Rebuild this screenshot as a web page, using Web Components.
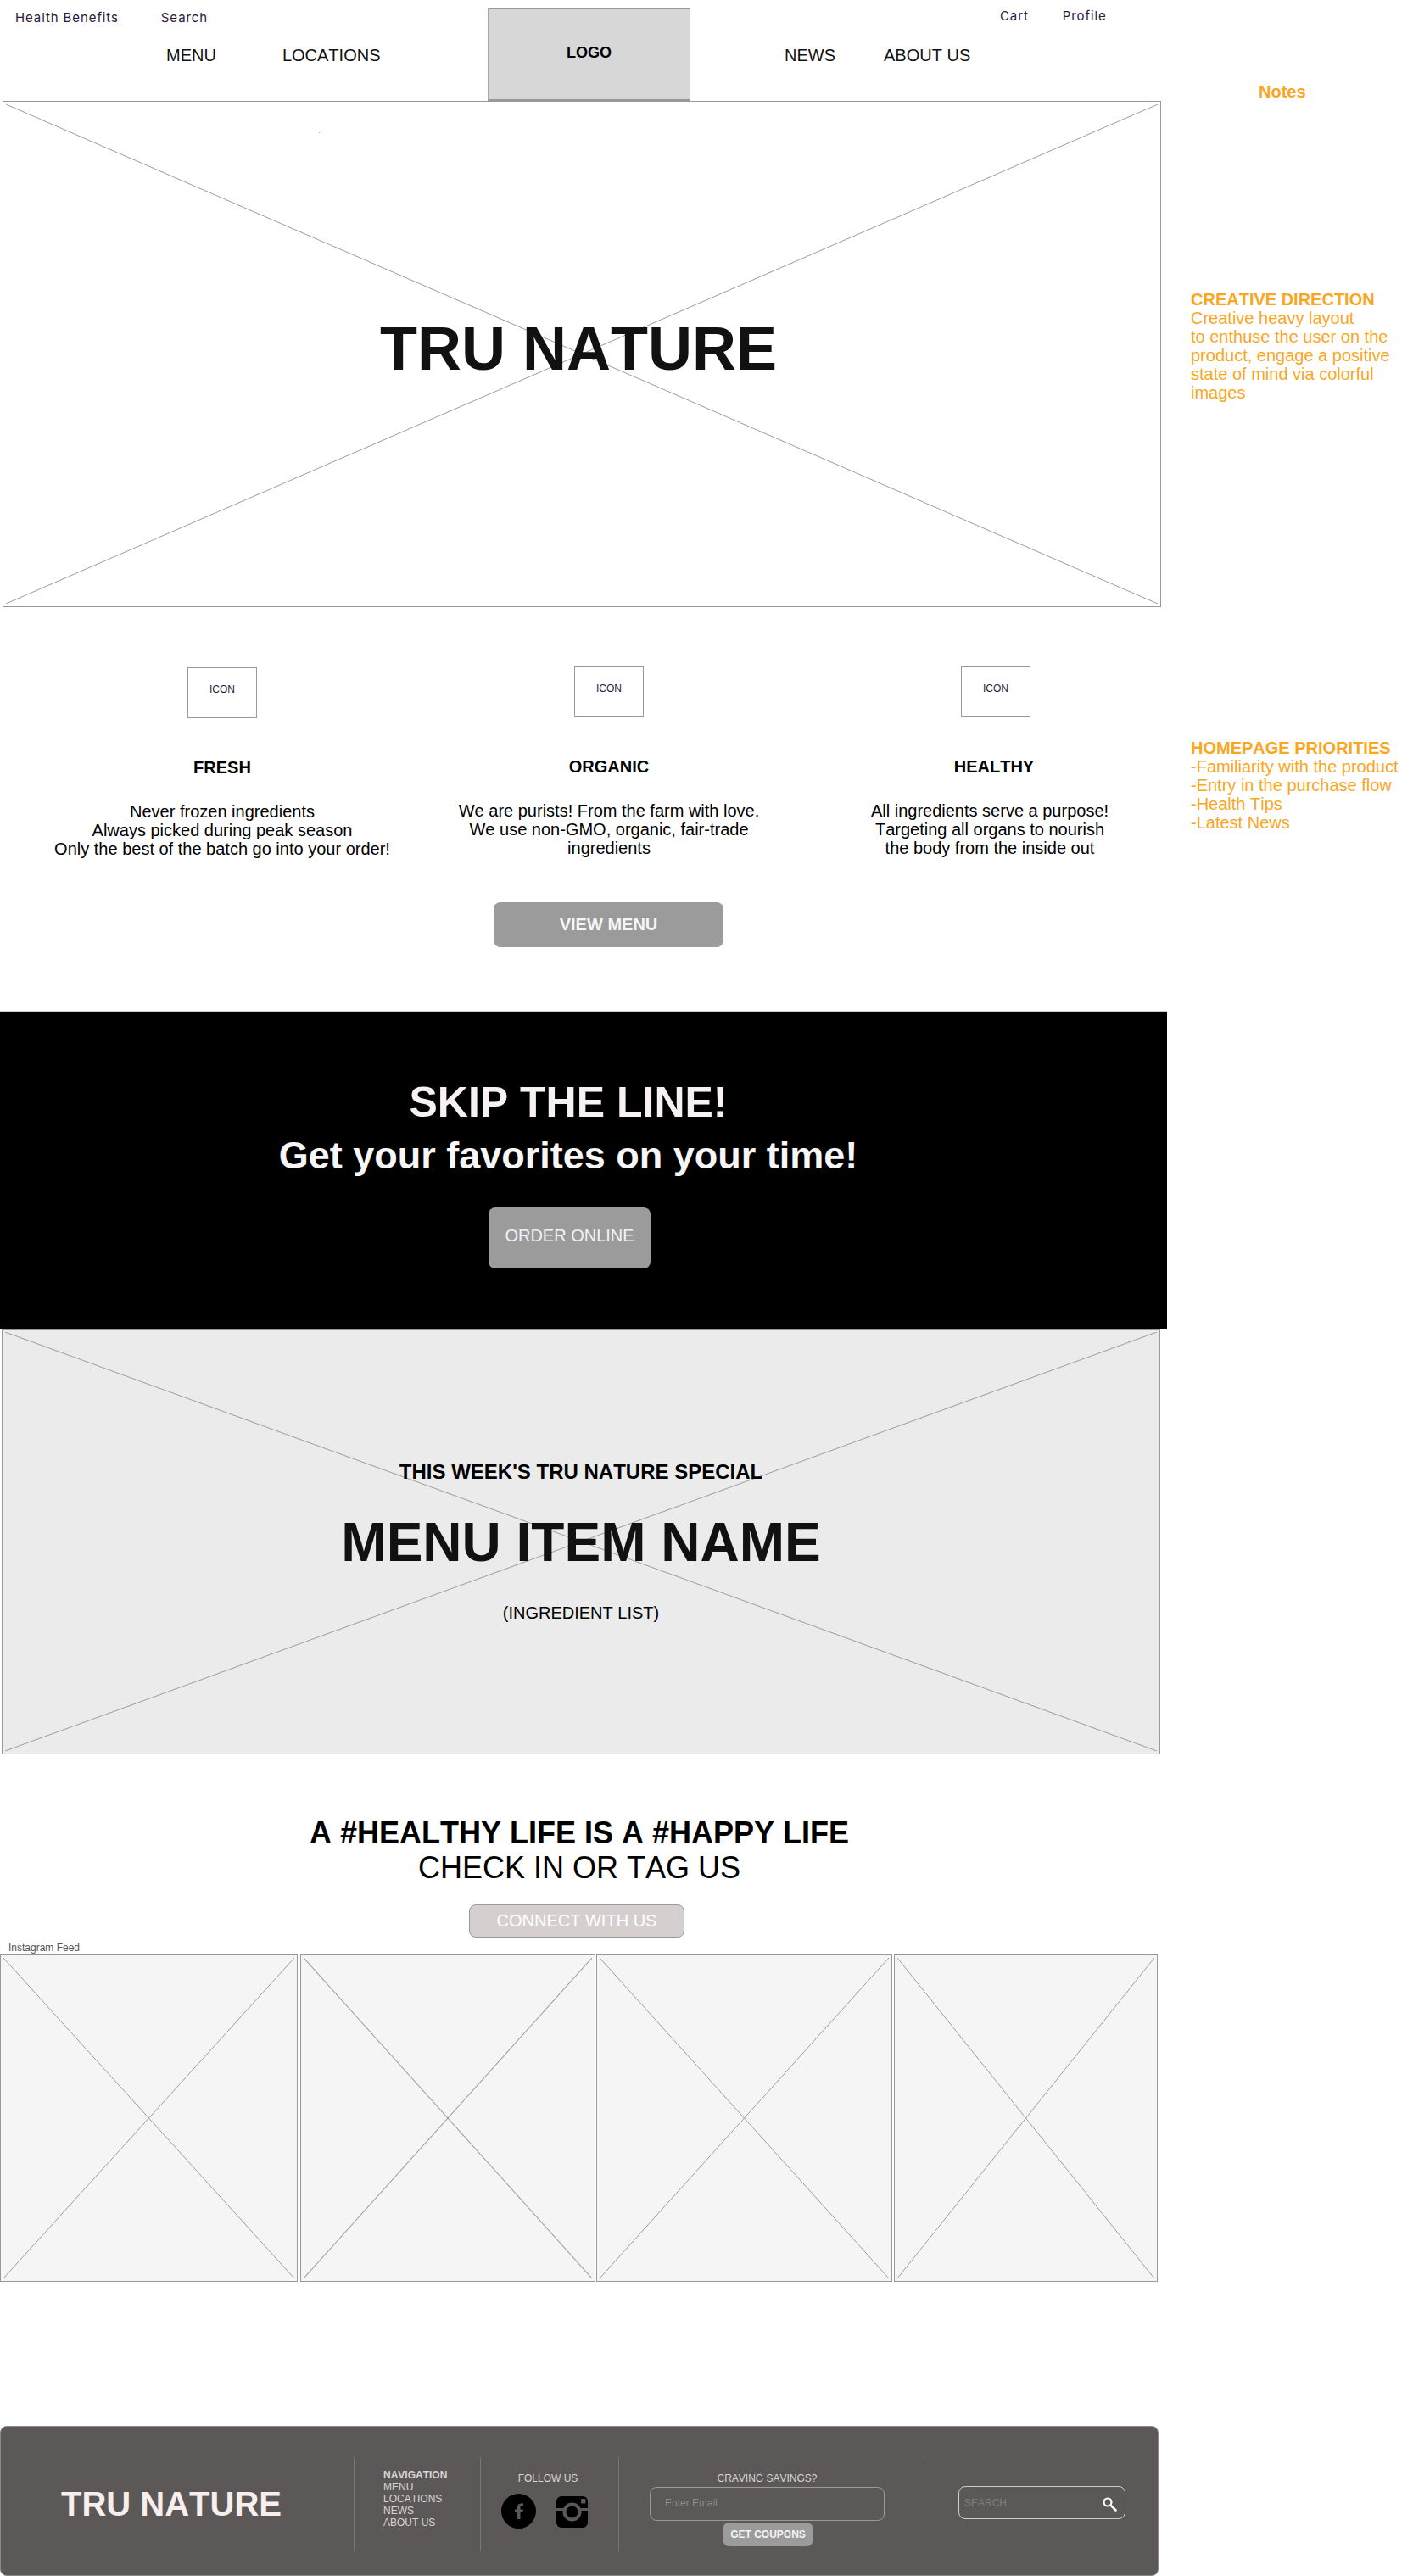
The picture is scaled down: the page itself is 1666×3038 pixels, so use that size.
<!DOCTYPE html>
<html lang="en">
  <head>
    <meta charset="UTF-8" />
    <title>Tru Nature wireframe</title>
    <style>
      html, body { margin: 0; background: #fff; }
      body { font-family: "Liberation Sans", Arial, sans-serif; color: #000; font-kerning: none; }
      .page { display: grid; grid-template-columns: 1376px 290px; width: 1666px; height: 3038px; overflow: hidden; }
      .main { display: block; min-width: 0; }
    </style>
  </head>
  <body>
    <div class="page">
      <div class="main">
        <site-header></site-header>
        <wire-box style="margin-left:3px;width:1366px;height:597px;">
          <hero-title></hero-title>
        </wire-box>
        <feature-row>
          <feature-col title="FRESH">Never frozen ingredients<br />Always picked during peak season<br />Only the best of the batch go into your order!</feature-col>
          <feature-col title="ORGANIC" style="--shift:-1px">We are purists! From the farm with love.<br />We use non-GMO, organic, fair-trade<br />ingredients</feature-col>
          <feature-col title="HEALTHY" style="--shift:-1px;--text-pad:14px;--head-pad:4px">All ingredients serve a purpose!<br />Targeting all organs to nourish<br />the body from the inside out</feature-col>
        </feature-row>
        <order-band></order-band>
        <wire-box style="margin-left:2px;width:1366px;height:502px;--fill:#ebebeb;">
          <special-item></special-item>
        </wire-box>
        <social-feed></social-feed>
        <site-footer></site-footer>
      </div>
      <side-notes></side-notes>
    </div>

    <script>
      const FONT = `"Liberation Sans", Arial, sans-serif`;

      // 線の入ったプレースホルダー
      class WireBox extends HTMLElement {
        constructor() {
          super();
          this.attachShadow({ mode: "open" });
        }
        connectedCallback() {
          this.shadowRoot.innerHTML = `
            <style>
              :host { display: block; position: relative; box-sizing: border-box; border: 1px solid #999; background: var(--fill, transparent); }
              svg { position: absolute; inset: 3px; width: calc(100% - 6px); height: calc(100% - 6px); }
              line { stroke: #9c9c9c; stroke-width: 1; vector-effect: non-scaling-stroke; }
              .content { position: relative; height: 100%; }
            </style>
            <svg viewBox="0 0 100 100" preserveAspectRatio="none" aria-hidden="true">
              <line x1="0" y1="0" x2="100" y2="100"></line>
              <line x1="100" y1="0" x2="0" y2="100"></line>
            </svg>
            <div class="content"><slot></slot></div>
          `;
        }
      }

      class SiteHeader extends HTMLElement {
        constructor() {
          super();
          this.attachShadow({ mode: "open" });
        }
        connectedCallback() {
          this.shadowRoot.innerHTML = `
            <style>
              :host { display: flex; height: 119px; font-family: ${FONT}; position: relative; z-index: 1; }
              .side { flex: none; box-sizing: border-box; }
              .left { width: 575px; }
              .right { width: 562px; }
              .top { display: flex; height: 21px; align-items: center; padding-top: 10px; font: 15px/21px Inter, Roboto, sans-serif; color: #2b1a3d; letter-spacing: .9px; }
              .nav { display: flex; height: 24px; align-items: center; margin-top: 22px; font-size: 20px; line-height: 24px; color: #111; }
              .left .top { padding-left: 18px; gap: 50px; }
              .left .nav { padding-left: 196px; gap: 78px; }
              .right .top { padding-left: 365px; gap: 40px; padding-top: 8px; }
              .right .nav { padding-left: 111px; gap: 57px; margin-top: 24px; }
              .logo { flex: none; box-sizing: border-box; width: 239px; height: 109px; margin-top: 10px; background: #d7d7d7; border: 1px solid #a5a5a5; border-top-color: #999; border-bottom: 2px solid #999; text-align: center; font-weight: bold; font-size: 18px; line-height: 20px; padding-top: 41px; }
            </style>
            <div class="side left">
              <div class="top"><span>Health Benefits</span><span>Search</span></div>
              <div class="nav"><span>MENU</span><span>LOCATIONS</span></div>
            </div>
            <div class="logo">LOGO</div>
            <div class="side right">
              <div class="top"><span>Cart</span><span>Profile</span></div>
              <div class="nav"><span>NEWS</span><span>ABOUT US</span></div>
            </div>
          `;
        }
      }

      class HeroTitle extends HTMLElement {
        constructor() {
          super();
          this.attachShadow({ mode: "open" });
        }
        connectedCallback() {
          this.shadowRoot.innerHTML = `
            <style>
              :host { display: grid; place-items: center; height: 100%; padding: 0 8px 14px 0; box-sizing: border-box; font-family: ${FONT}; }
              h1 { margin: 0; font-size: 72px; line-height: 84px; font-weight: bold; color: #111; }
              i { position: absolute; left: 372px; top: 36px; width: 1px; height: 1px; background: #aaa; }
            </style>
            <i></i>
            <h1>TRU NATURE</h1>
          `;
        }
      }

      class FeatureRow extends HTMLElement {
        constructor() {
          super();
          this.attachShadow({ mode: "open" });
        }
        connectedCallback() {
          this.shadowRoot.innerHTML = `
            <style>
              :host { display: block; height: 476px; box-sizing: border-box; padding-top: 70px; font-family: ${FONT}; }
              .cols { display: grid; grid-template-columns: repeat(3, 400px); column-gap: 56px; width: 1312px; padding-left: 62px; }
              .btn { box-sizing: border-box; width: 271px; height: 53px; margin: 52px 0 0 582px; border-radius: 8px; background: #9b9b9b; color: #f6f6f6; font-weight: bold; font-size: 20px; line-height: 53px; text-align: center; }
            </style>
            <div class="cols"><slot></slot></div>
            <div class="btn">VIEW MENU</div>
          `;
        }
      }

      class FeatureCol extends HTMLElement {
        constructor() {
          super();
          this.attachShadow({ mode: "open" });
        }
        connectedCallback() {
          const title = this.getAttribute("title") || "";
          this.removeAttribute("title");
          this.shadowRoot.innerHTML = `
            <style>
              :host { display: block; text-align: center; margin-top: calc(1px + var(--shift, 0px)); }
              .icon { box-sizing: border-box; width: 82px; height: 60px; margin: 0 auto; border: 1px solid #999; font-size: 12px; line-height: 14px; padding-top: 18px; color: #2b1a3d; }
              h3 { margin: 47px 0 0; padding-right: var(--head-pad, 0); font-size: 20px; line-height: 22px; font-weight: bold; }
              p { margin: 30px 0 0; padding-right: var(--text-pad, 0); font-size: 20px; line-height: 22px; }
            </style>
            <div class="icon">ICON</div>
            <h3>${title}</h3>
            <p><slot></slot></p>
          `;
        }
      }

      class OrderBand extends HTMLElement {
        constructor() {
          super();
          this.attachShadow({ mode: "open" });
        }
        connectedCallback() {
          this.shadowRoot.innerHTML = `
            <style>
              :host { display: block; box-sizing: border-box; height: 375px; border-top: 1px solid #ccc; background: #000; padding: 78px 36px 0 0; text-align: center; font-family: ${FONT}; color: #f7f1f1; }
              h2 { margin: 0; font-size: 50px; line-height: 58px; font-weight: bold; }
              p { margin: 8px 0 0; font-size: 45px; line-height: 52px; font-weight: bold; color: #f8f6f6; }
              .btn { box-sizing: border-box; width: 191px; height: 72px; margin: 35px 0 0 576px; border-radius: 8px; background: #9b9b9b; font-size: 20px; line-height: 24px; padding-top: 21px; color: #f2f2f2; }
            </style>
            <h2>SKIP THE LINE!</h2>
            <p>Get your favorites on your time!</p>
            <div class="btn">ORDER ONLINE</div>
          `;
        }
      }

      class SpecialItem extends HTMLElement {
        constructor() {
          super();
          this.attachShadow({ mode: "open" });
        }
        connectedCallback() {
          this.shadowRoot.innerHTML = `
            <style>
              :host { display: block; box-sizing: border-box; height: 100%; padding-top: 153px; text-align: center; font-family: ${FONT}; }
              h3 { margin: 0; font-size: 24px; line-height: 30px; font-weight: bold; }
              h2 { margin: 30px 0 0; font-size: 64px; line-height: 76px; font-weight: bold; color: #111; }
              p { margin: 32px 0 0; font-size: 20px; line-height: 26px; }
            </style>
            <h3>THIS WEEK'S TRU NATURE SPECIAL</h3>
            <h2>MENU ITEM NAME</h2>
            <p>(INGREDIENT LIST)</p>
          `;
        }
      }

      class SocialFeed extends HTMLElement {
        constructor() {
          super();
          this.attachShadow({ mode: "open" });
        }
        connectedCallback() {
          this.shadowRoot.innerHTML = `
            <style>
              :host { display: block; box-sizing: border-box; padding-top: 71px; font-family: ${FONT}; }
              h2 { margin: 0; padding-right: 10px; text-align: center; font-size: 36px; line-height: 44px; font-weight: bold; }
              p { margin: 0; padding-right: 10px; text-align: center; font-size: 36px; line-height: 38px; }
              .btn { box-sizing: border-box; width: 254px; height: 39px; margin: 24px 0 0 553px; border: 1px solid #999; border-radius: 8px; background: #d5cfcf; color: #fff; font-size: 20px; line-height: 37px; text-align: center; }
              .label { margin: 5px 0 1px 10px; font-size: 12px; line-height: 14px; color: #555; }
              .tiles { display: flex; height: 386px; }
              wire-box { --fill: #f5f5f5; flex: none; height: 386px; }
            </style>
            <h2>A #HEALTHY LIFE IS A #HAPPY LIFE</h2>
            <p>CHECK IN OR TAG US</p>
            <div class="btn">CONNECT WITH US</div>
            <div class="label">Instagram Feed</div>
            <div class="tiles">
              <wire-box style="width:351px"></wire-box>
              <wire-box style="width:348px;margin-left:3px"></wire-box>
              <wire-box style="width:349px;margin-left:1px"></wire-box>
              <wire-box style="width:311px;margin-left:2px"></wire-box>
            </div>
          `;
        }
      }

      class SiteFooter extends HTMLElement {
        constructor() {
          super();
          this.attachShadow({ mode: "open" });
        }
        connectedCallback() {
          this.shadowRoot.innerHTML = `
            <style>
              :host { display: flex; align-items: flex-start; box-sizing: border-box; width: 1366px; height: 177px; margin-top: 170px; padding-top: 36px; border: 1px solid #8a8a8a; border-radius: 8px; background: #5c5857; font-family: ${FONT}; color: #d8d6d5; font-size: 12px; line-height: 14px; }
              .brand { width: 416px; height: 111px; box-sizing: border-box; padding-left: 71px; font-size: 40px; line-height: 111px; font-weight: bold; color: #f7eeee; }
              .col { box-sizing: border-box; height: 111px; border-left: 1px solid #777; flex: none; }
              .nav { width: 149px; padding: 14px 0 0 34px; }
              .nav b { display: block; }
              .follow { width: 163px; padding-top: 18px; }
              .follow .t { text-align: center; padding-right: 4px; }
              .soc { display: flex; gap: 24px; align-items: flex-start; margin: 11px 0 0 24px; }
              .soc svg + svg { margin-top: 3px; }
              .email { width: 360px; padding: 18px 0 0 36px; }
              .email .t { width: 277px; text-align: center; }
              .field { box-sizing: border-box; width: 277px; height: 40px; margin-top: 3px; padding-left: 17px; border: 1px solid #999; border-radius: 8px; color: #8f8c8a; line-height: 36px; }
              .coupon { box-sizing: border-box; width: 107px; height: 28px; margin: 2px 0 0 86px; border-radius: 8px; background: #9b9b9b; color: #f4f4f4; font-weight: bold; line-height: 28px; text-align: center; }
              .find { width: 276px; padding: 34px 0 0 40px; }
              .search { box-sizing: border-box; display: flex; align-items: center; justify-content: space-between; width: 197px; height: 39px; padding: 0 9px 0 6px; border: 1px solid #ccc; border-radius: 8px; color: #807c7a; }
              .search svg { margin-top: 3px; }
            </style>
            <div class="brand">TRU NATURE</div>
            <div class="col nav">
              <b>NAVIGATION</b>
              <div>MENU</div>
              <div>LOCATIONS</div>
              <div>NEWS</div>
              <div>ABOUT US</div>
            </div>
            <div class="col follow">
              <div class="t">FOLLOW US</div>
              <div class="soc">
                <svg width="41" height="41" viewBox="0 0 41 41" aria-hidden="true">
                  <circle cx="20.500" cy="20.500" r="20.500" fill="#000"></circle>
                  <path d="M19 30V21.500h-3v-3h3v-2.700c0-2.600 1.500-4.300 4.300-4.300h2.700v3h-2c-1 0-1.500.5-1.500 1.500v2.500h3.400l-.5 3h-2.900V30z" fill="#5c5857"></path>
                </svg>
                <svg width="37" height="37" viewBox="0 0 37 37" aria-hidden="true">
                  <rect width="37" height="37" rx="6" fill="#000"></rect>
                  <rect x="0" y="14" width="37" height="3" fill="#5c5857"></rect>
                  <circle cx="18.500" cy="18.500" r="9" fill="#000" stroke="#5c5857" stroke-width="4"></circle>
                  <rect x="29" y="3" width="5.500" height="5.500" rx="1" fill="#5c5857"></rect>
                </svg>
              </div>
            </div>
            <div class="col email">
              <div class="t">CRAVING SAVINGS?</div>
              <div class="field">Enter Email</div>
              <div class="coupon">GET COUPONS</div>
            </div>
            <div class="col find">
              <div class="search">
                <span>SEARCH</span>
                <svg width="17" height="17" viewBox="0 0 17 17" aria-hidden="true">
                  <circle cx="6" cy="6" r="4.500" fill="none" stroke="#fff" stroke-width="2.200"></circle>
                  <path d="M9.800 9.800L15.500 15.500" stroke="#fff" stroke-width="2.600" stroke-linecap="round"></path>
                </svg>
              </div>
            </div>
          `;
        }
      }

      class SideNotes extends HTMLElement {
        constructor() {
          super();
          this.attachShadow({ mode: "open" });
        }
        connectedCallback() {
          this.shadowRoot.innerHTML = `
            <style>
              :host { display: block; box-sizing: border-box; padding: 97px 0 0 28px; font-family: ${FONT}; font-size: 20px; line-height: 22px; color: #faa61f; }
              .head { padding-left: 80px; font-weight: bold; }
              section { margin-top: 223px; }
              section + section { margin-top: 397px; }
              h4 { margin: 0; font-size: 20px; line-height: 22px; font-weight: bold; }
            </style>
            <div class="head">Notes</div>
            <section>
              <h4>CREATIVE DIRECTION</h4>
              Creative heavy layout<br />to enthuse the user on the<br />product, engage a positive<br />state of mind via colorful<br />images
            </section>
            <section>
              <h4>HOMEPAGE PRIORITIES</h4>
              -Familiarity with the product<br />-Entry in the purchase flow<br />-Health Tips<br />-Latest News
            </section>
          `;
        }
      }

      window.customElements.define("wire-box", WireBox);
      window.customElements.define("site-header", SiteHeader);
      window.customElements.define("hero-title", HeroTitle);
      window.customElements.define("feature-row", FeatureRow);
      window.customElements.define("feature-col", FeatureCol);
      window.customElements.define("order-band", OrderBand);
      window.customElements.define("special-item", SpecialItem);
      window.customElements.define("social-feed", SocialFeed);
      window.customElements.define("site-footer", SiteFooter);
      window.customElements.define("side-notes", SideNotes);
    </script>
  </body>
</html>
